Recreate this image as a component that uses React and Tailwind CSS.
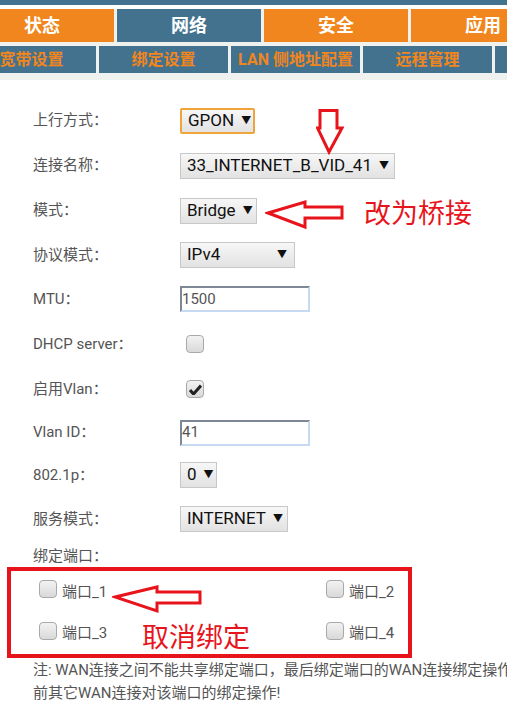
import React from 'react'

const font = { fontFamily: 'Roboto, "Noto Sans CJK SC", sans-serif' }

const Select = ({ w, text, focused }) => (
  <div
    className={`${w} h-[26px] flex items-center justify-between pl-[6px] pr-[7px] text-[17px] text-[#111] bg-gradient-to-b from-[#f7f7f7] to-[#e2e2e2] ${
      focused ? 'border-2 border-[#f0a53a] rounded-[2px]' : 'border border-[#c8c8c8]'
    }`}
  >
    <span className="mr-[7px] whitespace-nowrap">{text}</span>
    <span className="text-[10px] leading-none">▼</span>
  </div>
)

const TextInput = ({ value }) => (
  <div className="w-[130px] h-[26px] flex items-center border-2 border-t-[#7d8796] border-l-[#7d8796] border-b-[#c6daf2] border-r-[#c6daf2] bg-white text-[15px] text-[#555]">
    {value}
  </div>
)

const Checkbox = ({ checked }) => (
  <div className="w-[18px] h-[18px] rounded-[4px] border border-[#a9a9a9] bg-gradient-to-b from-[#f2f2f2] to-[#d9d9d9] flex items-center justify-center">
    {checked && (
      <svg width="13" height="11" viewBox="0 0 13 11">
        <path d="M1 6 L4.5 10 L12 1.5" fill="none" stroke="#222" strokeWidth="3" strokeLinejoin="round" />
      </svg>
    )}
  </div>
)

const rows = [
  { label: '上行方式：', h: 'h-[45px]', ctrl: <Select w="w-[75px]" text="GPON" focused /> },
  { label: '连接名称：', h: 'h-[45px]', ctrl: <Select w="w-[215px]" text="33_INTERNET_B_VID_41" /> },
  { label: '模式：', h: 'h-[45px]', ctrl: <Select w="w-[77px]" text="Bridge" /> },
  { label: '协议模式：', h: 'h-[44px]', ctrl: <Select w="w-[115px]" text="IPv4" /> },
  { label: 'MTU：', h: 'h-[44px]', ctrl: <TextInput value="1500" /> },
  { label: 'DHCP server：', h: 'h-[46px]', ctrl: <div className="pl-[6px]"><Checkbox /></div> },
  { label: '启用Vlan：', h: 'h-[44px]', ctrl: <div className="pl-[6px]"><Checkbox checked /></div> },
  { label: 'Vlan ID：', h: 'h-[43px]', ctrl: <TextInput value="41" /> },
  { label: '802.1p：', h: 'h-[42px]', ctrl: <Select w="w-[37px]" text="0" /> },
  { label: '服务模式：', h: 'h-[46px]', ctrl: <Select w="w-[108px]" text="INTERNET" /> },
]

const tabs = [
  { name: '状态', active: false },
  { name: '网络', active: true },
  { name: '安全', active: false },
  { name: '应用', active: false },
]

const subTabs = ['宽带设置', '绑定设置', 'LAN 侧地址配置', '远程管理', '']

const Port = ({ name }) => (
  <div className="flex items-center gap-[5px]">
    <div className="mb-[6px]"><Checkbox /></div>
    <span className="text-[15px] text-[#555]">{name}</span>
  </div>
)

export default function App() {
  return (
    <div className="relative w-full min-h-[712px] bg-white overflow-hidden" style={font}>
      {/* header */}
      <div className="bg-[#eff1ef]">
        <div className="h-[5px] bg-[#43728f]" />
        <div className="h-[4px] bg-white" />
        <div className="flex -ml-[30px] h-[33px]">
          {tabs.map((t) => (
            <div
              key={t.name}
              className={`shrink-0 w-[144px] mr-[3px] flex items-center justify-center text-white font-bold text-[18px] ${
                t.active ? 'bg-[#43728f]' : 'bg-[#f0861d]'
              }`}
            >
              {t.name}
            </div>
          ))}
        </div>
        <div className="h-[4px]" />
        <div className="flex -ml-[33px] h-[27px]">
          {subTabs.map((s, i) => (
            <div
              key={i}
              className="shrink-0 w-[129px] mr-[3px] flex items-center justify-center bg-[#43728f] text-[#f0861d] font-bold text-[16px]"
            >
              {s}
            </div>
          ))}
        </div>
        <div className="h-[7px]" />
      </div>

      {/* form */}
      <div className="pt-[18px]">
        {rows.map((r) => (
          <div key={r.label} className={`${r.h} flex items-center`}>
            <div className="w-[180px] pl-[33px] text-[15px] text-[#555]">{r.label}</div>
            {r.ctrl}
          </div>
        ))}
        <div className="pl-[33px] pt-[3px] leading-[22px] text-[15px] text-[#555]">绑定端口：</div>
        <div className="ml-[7px] w-[405px] border-4 border-[#e8141c] pl-[28px]">
          <div className="grid grid-cols-[287px_1fr] h-[42px] items-center">
            <Port name="端口_1" />
            <Port name="端口_2" />
          </div>
          <div className="grid grid-cols-[287px_1fr] h-[41px] items-center">
            <Port name="端口_3" />
            <Port name="端口_4" />
          </div>
        </div>
        <div className="pl-[33px] pt-[1px] text-[15px] leading-[23px] text-[#555]">
          <div className="whitespace-nowrap">注: WAN连接之间不能共享绑定端口，最后绑定端口的WAN连接绑定操作将覆盖之</div>
          <div className="whitespace-nowrap">前其它WAN连接对该端口的绑定操作!</div>
        </div>
      </div>

      {/* annotations */}
      <svg className="absolute left-[316px] top-[109px]" width="28" height="46" viewBox="0 0 28 46">
        <polygon points="4,1.5 21,1.5 21,19 26,19 13,43 1.5,19 4,19" fill="none" stroke="#e8141c" strokeWidth="3" />
      </svg>
      <svg className="absolute left-[265px] top-[199px]" width="80" height="31" viewBox="0 0 80 31">
        <polygon points="3,14 40,3 40,8 77,8 77,19 40,19 40,28" fill="none" stroke="#e8141c" strokeWidth="3" />
      </svg>
      <div className="absolute left-[364px] top-[195px] text-[27px] leading-[34px] text-[#e8141c]" style={{ fontFamily: '"Noto Sans CJK SC", sans-serif' }}>
        改为桥接
      </div>
      <svg className="absolute left-[112px] top-[584px]" width="92" height="30" viewBox="0 0 92 30">
        <polygon points="3,13 45,3 45,8 88,8 88,19 45,19 45,27" fill="none" stroke="#e8141c" strokeWidth="3" />
      </svg>
      <div className="absolute left-[142px] top-[619px] text-[27px] leading-[34px] text-[#e8141c]" style={{ fontFamily: '"Noto Sans CJK SC", sans-serif' }}>
        取消绑定
      </div>
    </div>
  )
}
